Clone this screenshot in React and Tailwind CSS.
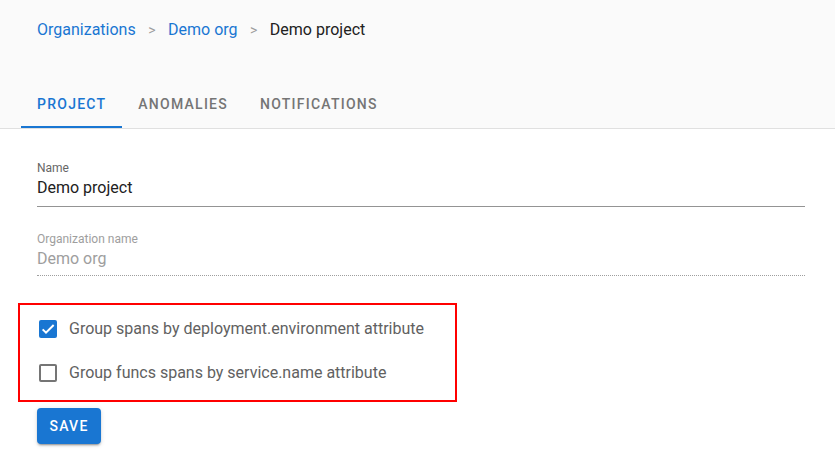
import React from "react";

export default function App() {
  return (
    <div className="w-[835px] h-[472px] bg-white font-['Roboto',sans-serif] overflow-hidden">
      <div className="bg-[#fafafa] border-b border-[#e0e0e0]">
        <div className="flex items-center h-[60px] pl-[37px] text-[16px]">
          <span className="text-[#1976d2]">Organizations</span>
          <span className="text-[#9e9e9e] text-[14px] mx-[12.5px]">&gt;</span>
          <span className="text-[#1976d2]">Demo org</span>
          <span className="text-[#9e9e9e] text-[14px] mx-[12.5px]">&gt;</span>
          <span className="text-[#212121]">Demo project</span>
        </div>
        <div className="flex pl-[21px] mt-[20px]">
          <div className="h-[48px] pt-[2px] px-[16px] flex items-center text-[14px] font-medium tracking-[1.25px] text-[#1976d2] border-b-2 border-[#1976d2]">PROJECT</div>
          <div className="h-[48px] pt-[2px] px-[16px] flex items-center text-[14px] font-medium tracking-[1.25px] text-[#757575] border-b-2 border-transparent">ANOMALIES</div>
          <div className="h-[48px] pt-[2px] px-[16px] flex items-center text-[14px] font-medium tracking-[1.25px] text-[#757575] border-b-2 border-transparent">NOTIFICATIONS</div>
        </div>
      </div>
      <div className="pl-[37px] pr-[30px] pt-[31px]">
        <div className="border-b border-[#949494] pb-[6px]">
          <div className="text-[12px] text-[#666] leading-[16px]">Name</div>
          <div className="text-[16px] text-[#212121] leading-[24px]">Demo project</div>
        </div>
        <div className="mt-[24px] border-b border-dotted border-[#9e9e9e] pb-[4px]">
          <div className="text-[12px] text-[#9e9e9e] leading-[16px]">Organization name</div>
          <div className="text-[16px] text-[#9e9e9e] leading-[24px]">Demo org</div>
        </div>
      </div>
      <div className="ml-[18px] mt-[27px] w-[439px] h-[99px] border-2 border-[#ff0000] flex flex-col pl-[19px] pt-[11px] gap-[18px]">
        <div className="flex items-center gap-[12px] h-[26px]">
          <div className="w-[18px] h-[18px] rounded-[2px] bg-[#1976d2] flex items-center justify-center">
            <svg width="16" height="16" viewBox="0 0 24 24"><path d="M4 12.5l5 5L20.5 6" fill="none" stroke="white" strokeWidth="3"/></svg>
          </div>
          <span className="text-[16px] text-[#616161]">Group spans by deployment.environment attribute</span>
        </div>
        <div className="flex items-center gap-[12px] h-[26px]">
          <div className="w-[18px] h-[18px] rounded-[2px] border-2 border-[#757575]" />
          <span className="text-[16px] text-[#616161]">Group funcs spans by service.name attribute</span>
        </div>
      </div>
      <div className="ml-[37px] mt-[6px]">
        <button className="w-[64px] h-[36px] rounded-[4px] bg-[#1976d2] text-white text-[14px] font-medium tracking-[1.25px] shadow-[0_3px_1px_-2px_rgba(0,0,0,0.2),0_2px_2px_0_rgba(0,0,0,0.14),0_1px_5px_0_rgba(0,0,0,0.12)]">SAVE</button>
      </div>
    </div>
  );
}
